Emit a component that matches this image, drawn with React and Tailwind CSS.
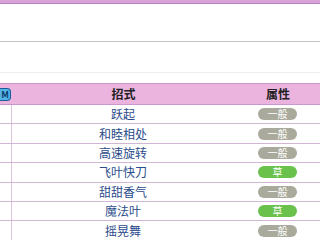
const moves = [
  { name: '跃起', type: '一般' },
  { name: '和睦相处', type: '一般' },
  { name: '高速旋转', type: '一般' },
  { name: '飞叶快刀', type: '草' },
  { name: '甜甜香气', type: '一般' },
  { name: '魔法叶', type: '草' },
  { name: '摇晃舞', type: '一般' },
]

const font = { fontFamily: '"Noto Sans CJK SC", "Noto Sans", sans-serif' }

export default function App() {
  return (
    <div className="w-[320px] h-[240px] overflow-hidden bg-white" style={font}>
      {/* top bar */}
      <div className="h-[3px] bg-[#d9a3d9]" />
      <div className="h-px bg-[#b585c4]" />

      {/* blank area */}
      <div className="h-[37px]" />
      <div className="h-px bg-[#c4c4c4]" />
      <div className="h-[30px]" />
      <div className="h-px bg-[#f0eef0]" />
      <div className="h-[10px]" />

      {/* table header */}
      <div className="flex h-[22px] bg-[#eab4de] border-t border-b border-[#c996cd] items-center">
        <div className="w-[12px] shrink-0 flex items-center">
          <span className="w-[11px] h-[13px] rounded-r-[4px] bg-[#52b4e6] border border-l-0 border-[#1d5c98] text-[9px] leading-none font-bold text-[#0b3a6a] flex items-center justify-center">
            M
          </span>
        </div>
        <div className="w-[223px] text-center text-[12px] font-bold text-[#222]">招式</div>
        <div className="flex-1 text-center text-[12px] font-bold text-[#222] pl-[1px]">属性</div>
      </div>

      {/* rows */}
      {moves.map(m => (
        <div key={m.name} className="flex h-[19.4px] border-b border-[#d2b6d6] items-center">
          <div className="w-[12px] shrink-0 self-stretch border-r border-[#dcc2dc]" />
          <div className="w-[222px] text-center text-[12px] leading-none text-[#2b4c8c]">{m.name}</div>
          <div className="flex-1 flex justify-center pl-[1px]">
            <span
              className={
                m.type === '草'
                  ? 'w-[39px] h-[12px] rounded-full bg-[#6ac24c] text-white text-[10px] leading-[12px] text-center'
                  : 'w-[39px] h-[12px] rounded-full bg-[#a9aa9b] text-white text-[10px] leading-[12px] text-center'
              }
            >
              {m.type}
            </span>
          </div>
        </div>
      ))}
    </div>
  )
}
